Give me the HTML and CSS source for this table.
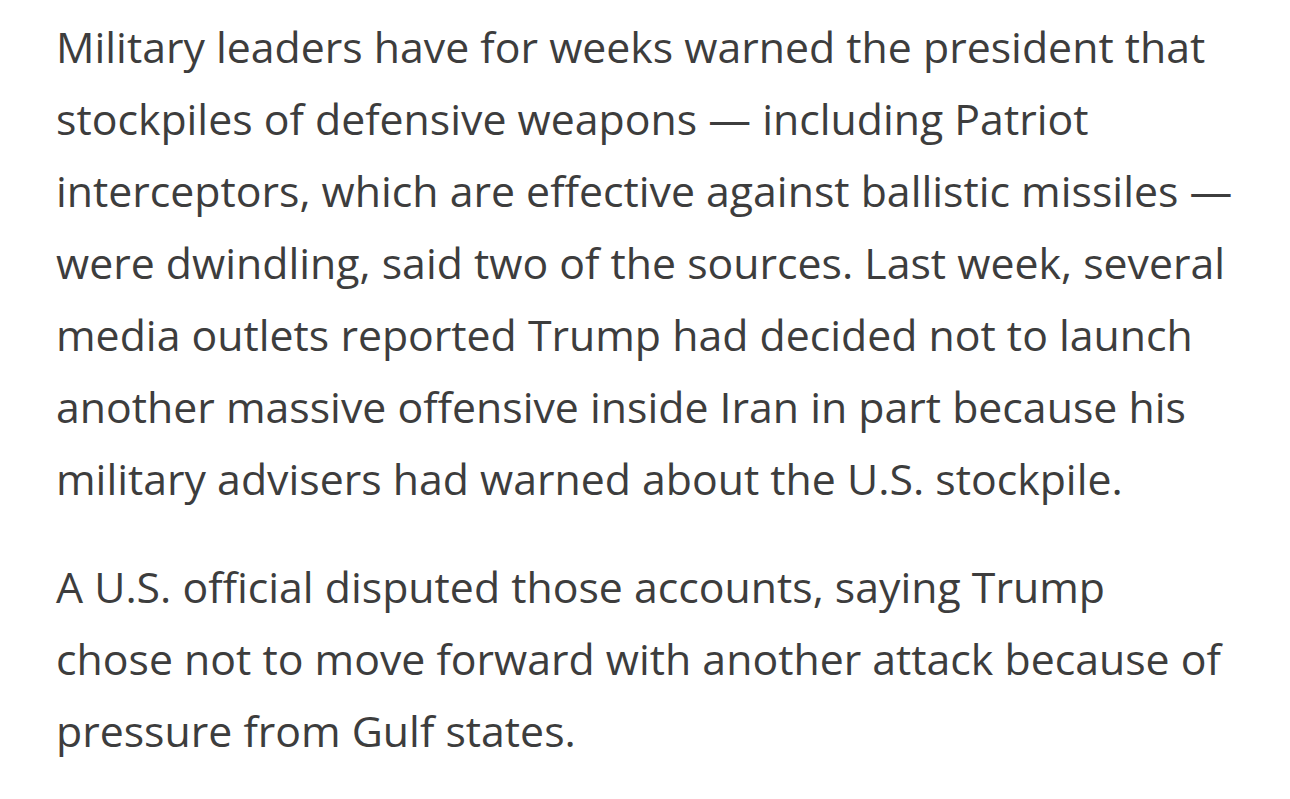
FILE: index.html
```html
<!DOCTYPE html>
<html lang="en">
<head>
<meta charset="utf-8">
<title>Article</title>
<link rel="stylesheet" href="styles.css">
</head>
<body>
<article class="article">
<p class="para">Military leaders have for weeks warned the president that<br>stockpiles of defensive weapons — including Patriot<br>interceptors, which are effective against ballistic missiles —<br>were dwindling, said two of the sources. Last week, several<br>media outlets reported Trump had decided not to launch<br>another massive offensive inside Iran in part because his<br>military advisers had warned about the U.S. stockpile.</p>
<p class="para">A U.S. official disputed those accounts, saying Trump<br>chose not to move forward with another attack because of<br>pressure from Gulf states.</p>
</article>
</body>
</html>
```
FILE: styles.css
```css
html, body {
  margin: 0;
  padding: 0;
  background: #ffffff;
}
.article {
  padding: 11px 0 0 56px;
  font-family: "Open Sans", "Noto Sans", sans-serif;
  font-size: 42.8px;
  line-height: 72px;
  color: #3d3d3d;
}
.para {
  margin: 0 0 36px 0;
  white-space: nowrap;
}
```
